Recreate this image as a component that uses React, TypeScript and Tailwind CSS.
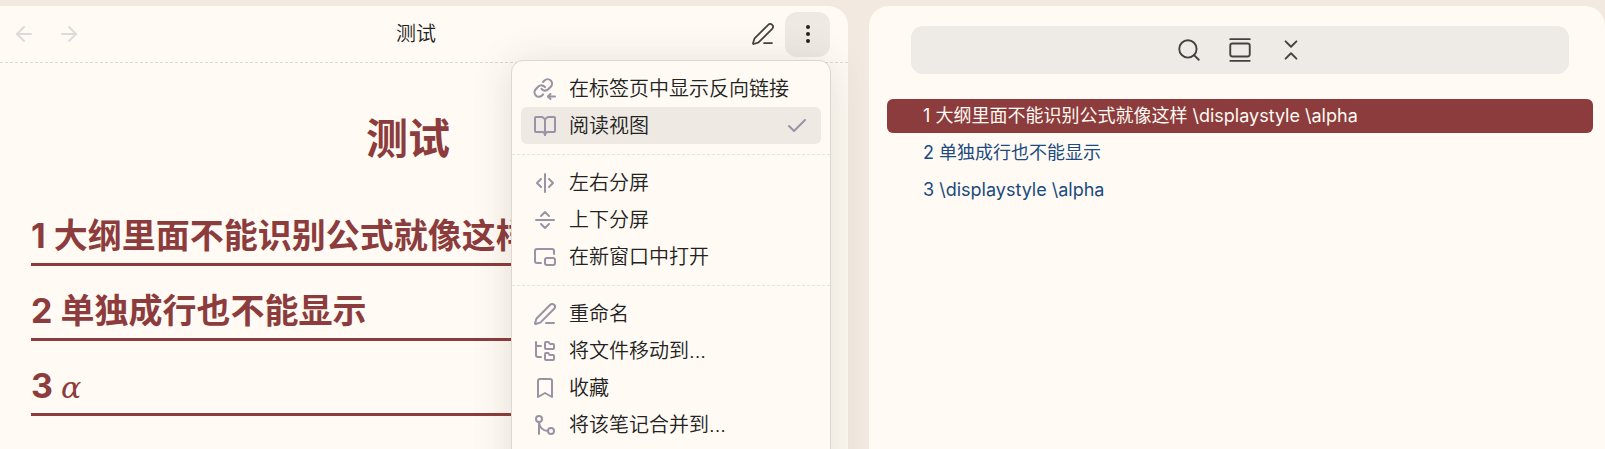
import {
  ArrowLeft,
  ArrowRight,
  Bookmark,
  BookOpen,
  Check,
  ChevronsDownUp,
  EllipsisVertical,
  FolderTree,
  GalleryVertical,
  GitMerge,
  PenLine,
  PictureInPicture2,
  Search,
  SeparatorHorizontal,
  SeparatorVertical,
} from "lucide-react";
import type { ComponentType, ReactNode } from "react";

interface IconProps {
  className?: string;
  strokeWidth?: number;
}

interface MenuEntry {
  label: string;
  icon: ComponentType<IconProps>;
  checked?: boolean;
}

// chain link with an incoming arrow, lucide has no such icon
function BacklinkIcon({ className }: IconProps) {
  return (
    <svg
      viewBox="0 0 24 24"
      fill="none"
      stroke="currentColor"
      strokeWidth={2}
      strokeLinecap="round"
      strokeLinejoin="round"
      className={className}
    >
      <g transform="translate(-0.3 0.4) scale(0.88)" strokeWidth={2.4}>
        <path d="M10 13a5 5 0 0 0 7.54.54l3-3a5 5 0 0 0-7.07-7.07l-1.72 1.71" />
        <path d="M14 11a5 5 0 0 0-7.54-.54l-3 3a5 5 0 0 0 7.07 7.07l1.2-1.2" />
      </g>
      <path d="M22 19.500H15" />
      <path d="M17.500 17L15 19.500l2.500 2.500" />
    </svg>
  );
}

const menuGroups: MenuEntry[][] = [
  [
    { label: "在标签页中显示反向链接", icon: BacklinkIcon },
    { label: "阅读视图", icon: BookOpen, checked: true },
  ],
  [
    { label: "左右分屏", icon: SeparatorVertical },
    { label: "上下分屏", icon: SeparatorHorizontal },
    { label: "在新窗口中打开", icon: PictureInPicture2 },
  ],
  [
    { label: "重命名", icon: PenLine },
    { label: "将文件移动到...", icon: FolderTree },
    { label: "收藏", icon: Bookmark },
    { label: "将该笔记合并到...", icon: GitMerge },
  ],
];

const outline = [
  { id: "h1", text: "1 大纲里面不能识别公式就像这样 \\displaystyle \\alpha", active: true },
  { id: "h2", text: "2 单独成行也不能显示" },
  { id: "h3", text: "3 \\displaystyle \\alpha" },
];

function Heading({ id, children }: { id: string; children: ReactNode }) {
  return (
    <h2
      id={id}
      className="h-[55px] border-b-3 border-[#8c3c3c] text-[34px] leading-[50px] font-bold whitespace-nowrap"
    >
      {children}
    </h2>
  );
}

function MoreMenu() {
  return (
    <div
      role="menu"
      className="absolute top-[54px] right-[17px] z-10 w-80 rounded-xl border border-[#dcd6d4] bg-[#fffaf3] pt-[9px] pb-12 shadow-[0_4px_40px_rgba(60,50,40,0.14)]"
    >
      {menuGroups.map((group, i) => (
        <div
          key={i}
          className={i > 0 ? "mt-2.5 border-t border-dashed border-[#e9e2dd] px-[9px] pt-[9px]" : "px-[9px]"}
        >
          {group.map(({ label, icon: Icon, checked }) => (
            <button
              key={label}
              role="menuitem"
              className={`flex h-[37px] w-full items-center rounded-md px-3 text-left text-xl font-[350] whitespace-nowrap ${
                checked ? "bg-[#eee9e3]" : ""
              }`}
            >
              <Icon className="mr-3 h-6 w-6 shrink-0 text-[#9893a5]" />
              <span className="flex-1">{label}</span>
              {checked && <Check className="h-6 w-6 text-[#9893a5]" />}
            </button>
          ))}
        </div>
      ))}
    </div>
  );
}

function NotePane() {
  return (
    <main className="relative min-w-0 flex-[848] rounded-tr-[20px] bg-[#fffaf3]">
      <header className="flex h-[57px] items-center border-b border-dashed border-[#dcd8d5] pr-[18px] pl-3">
        <div className="flex gap-[21px] text-[#dfdad9]">
          <button aria-label="后退">
            <ArrowLeft className="h-6 w-6" />
          </button>
          <button aria-label="前进">
            <ArrowRight className="h-6 w-6" />
          </button>
        </div>
        <div className="flex-1 text-center text-xl font-[350]">测试</div>
        <button aria-label="编辑" className="mr-2.5 text-[#44413f]">
          <PenLine className="h-6 w-6" strokeWidth={1.75} />
        </button>
        <button
          aria-label="更多选项"
          className="flex h-[45px] w-[45px] items-center justify-center rounded-xl bg-[#eee9e3]"
        >
          <EllipsisVertical className="h-6 w-6" />
        </button>
      </header>

      <article className="pr-[63px] pl-[31px] text-[#8c3c3c]">
        <h1 className="mt-[45px] mb-[41px] text-center text-[42px] leading-[62px] font-bold">测试</h1>
        <div className="space-y-5">
          <Heading id="h1">1 大纲里面不能识别公式就像这样</Heading>
          <Heading id="h2">2 单独成行也不能显示</Heading>
          <Heading id="h3">
            3 <i className="font-['DejaVu_Serif',serif] text-3xl leading-none font-normal">α</i>
          </Heading>
        </div>
      </article>

      <MoreMenu />
    </main>
  );
}

function OutlinePane() {
  return (
    <aside className="min-w-0 flex-[736] rounded-t-[20px] bg-[#fffaf3]">
      <div className="mt-5 mr-9 ml-[42px] flex h-12 items-center justify-center gap-[25px] rounded-xl bg-[#eeeae6] text-[#44413f]">
        <button aria-label="搜索">
          <Search className="h-[26px] w-[26px]" strokeWidth={1.75} />
        </button>
        <button aria-label="定位">
          <GalleryVertical className="h-[26px] w-[26px]" strokeWidth={1.75} />
        </button>
        <button aria-label="折叠">
          <ChevronsDownUp className="h-[26px] w-[26px]" strokeWidth={1.75} />
        </button>
      </div>
      <nav className="mt-[25px] mr-3 ml-[18px] flex flex-col gap-[3px]">
        {outline.map((item) => (
          <a
            key={item.id}
            href={`#${item.id}`}
            className={`h-[34px] rounded-md pl-9 text-lg leading-[34px] whitespace-nowrap ${
              item.active ? "bg-[#8c3c3c] text-[#fffaf3]" : "text-[#1a4a80]"
            }`}
          >
            {item.text}
          </a>
        ))}
      </nav>
    </aside>
  );
}

export default function App() {
  return (
    <div className="flex h-screen gap-[21px] overflow-hidden bg-[#f2e9e1] pt-1.5 font-['Inter','Noto_Sans_CJK_SC',sans-serif] text-[#222]">
      <NotePane />
      <OutlinePane />
    </div>
  );
}
